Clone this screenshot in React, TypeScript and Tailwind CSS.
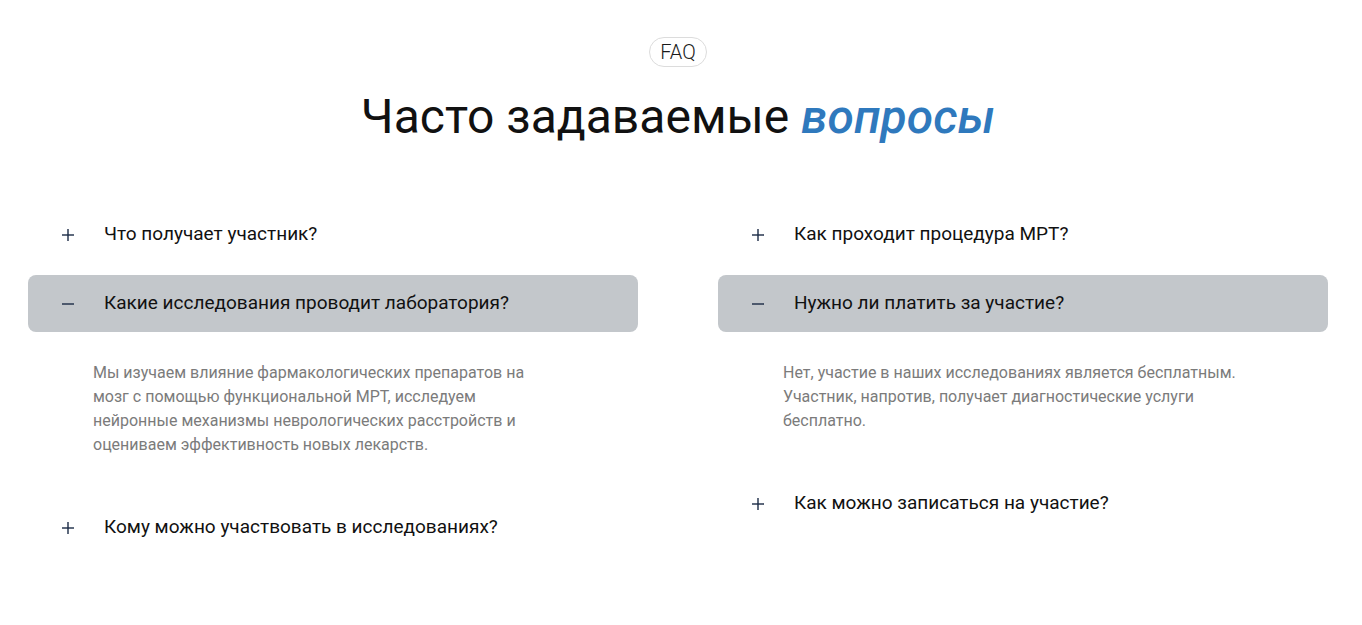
import React, { useState } from 'react';

type Item = { q: string; a?: string };

const left: Item[] = [
  { q: 'Что получает участник?' },
  {
    q: 'Какие исследования проводит лаборатория?',
    a: 'Мы изучаем влияние фармакологических препаратов на мозг с помощью функциональной МРТ, исследуем нейронные механизмы неврологических расстройств и оцениваем эффективность новых лекарств.',
  },
  { q: 'Кому можно участвовать в исследованиях?' },
];

const right: Item[] = [
  { q: 'Как проходит процедура МРТ?' },
  {
    q: 'Нужно ли платить за участие?',
    a: 'Нет, участие в наших исследованиях является бесплатным. Участник, напротив, получает диагностические услуги бесплатно.',
  },
  { q: 'Как можно записаться на участие?' },
];

const Icon: React.FC<{ open: boolean }> = ({ open }) => (
  <svg width="14" height="14" viewBox="0 0 14 14" className="shrink-0 text-[#1b2a45]">
    <path d="M1 7h12" stroke="currentColor" strokeWidth="1.4" />
    {!open && <path d="M7 1v12" stroke="currentColor" strokeWidth="1.4" />}
  </svg>
);

const Column: React.FC<{ items: Item[] }> = ({ items }) => {
  const [openIdx, setOpenIdx] = useState<number>(1);
  return (
    <div className="flex flex-col gap-3">
      {items.map((item, i) => {
        const open = openIdx === i;
        return (
          <div key={item.q}>
            <button
              onClick={() => setOpenIdx(open ? -1 : i)}
              className={`flex h-[57px] w-full items-center gap-[29px] rounded-lg pl-[33px] text-left ${
                open ? 'bg-[#c3c7cb]' : 'bg-transparent'
              }`}
            >
              <Icon open={open} />
              <span className="text-[19px] text-[#111111]">{item.q}</span>
            </button>
            {open && item.a && (
              <p className="max-w-[525px] pl-[65px] pt-[29px] pb-[30px] text-[16px] leading-6 text-[#7b7b7b]">
                {item.a}
              </p>
            )}
          </div>
        );
      })}
    </div>
  );
};

const App: React.FC = () => {
  return (
    <div className="min-h-screen bg-white pt-[37px] font-['Roboto',sans-serif]">
      <div className="flex flex-col items-center pr-[6px]">
        <span className="flex h-[30px] items-center rounded-full border border-[#dcdcdc] px-[10px] text-[20px] font-light text-[#1a1a1a]">
          FAQ
        </span>
        <h1 className="mt-[20px] text-[48px] leading-[60px] text-[#111111]">
          Часто задаваемые <span className="font-medium italic text-[#2f79bd]">вопросы</span>
        </h1>
      </div>

      {/* FAQ columns */}
      <div className="mt-[59px] grid grid-cols-2 gap-[80px] pl-[28px] pr-[34px]">
        <Column items={left} />
        <Column items={right} />
      </div>
    </div>
  );
};

export default App;
